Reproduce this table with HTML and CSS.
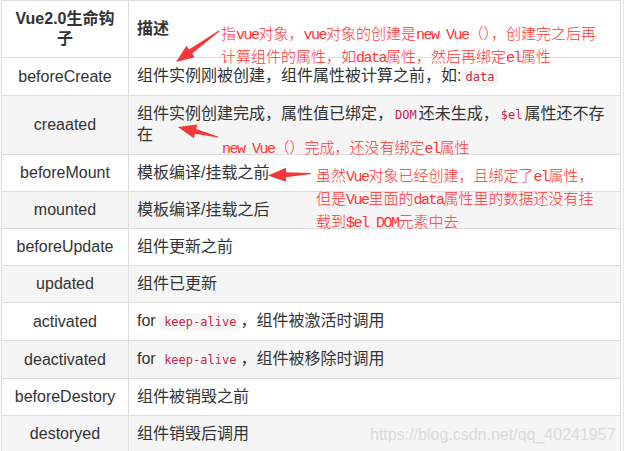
FILE: index.html
```html
<!DOCTYPE html>
<html lang="zh-CN">
<head>
  <meta charset="UTF-8">
  <meta name="viewport" content="width=device-width, initial-scale=1.0">
  <title>Vue2.0 生命钩子</title>
  <link rel="stylesheet" href="styles.css">
</head>
<body>

<div class="page">
  <table class="hooks">
    <colgroup>
      <col class="col-name">
      <col>
    </colgroup>
    <thead>
      <tr><th>Vue2.0生命钩子</th><th class="desc">描述</th></tr>
    </thead>
    <tbody>
      <tr><td>beforeCreate</td><td>组件实例刚被创建，组件属性被计算之前，如:<code>data</code></td></tr>
      <tr class="tall"><td>creaated</td><td>组件实例创建完成，属性值已绑定，<code class="tight">DOM</code>还未生成，<code class="tight">$el</code>属性还不存在</td></tr>
      <tr><td>beforeMount</td><td>模板编译/挂载之前</td></tr>
      <tr><td>mounted</td><td>模板编译/挂载之后</td></tr>
      <tr><td>beforeUpdate</td><td>组件更新之前</td></tr>
      <tr><td>updated</td><td>组件已更新</td></tr>
      <tr><td>activated</td><td>for <code>keep-alive</code>，组件被激活时调用</td></tr>
      <tr><td>deactivated</td><td>for <code>keep-alive</code>，组件被移除时调用</td></tr>
      <tr><td>beforeDestory</td><td>组件被销毁之前</td></tr>
      <tr><td>destoryed</td><td>组件销毁后调用</td></tr>
    </tbody>
  </table>

  <!-- red notes drawn over the table -->
  <svg class="arrows" width="625" height="451" viewBox="0 0 625 451">
    <polygon points="218.7,30.6 189.1,49.5 186.5,45.8 176,62 194.7,57.2 192.1,53.5 219.3,31.4"/>
    <polygon points="218.1,136.5 196.1,129 197.2,124.6 178,127 193.8,138.2 194.9,133.8 217.9,137.5"/>
    <polygon points="311,173 286,172.2 286,167.7 268,175.5 286,181.7 286,177.2 311,174"/>
  </svg>

  <p class="note note-top">指<span class="en">vue</span>对象，<span class="en">vue</span>对象的创建是<span class="en">new Vue</span>（），创建完之后再<br>计算组件的属性，如<span class="en">data</span>属性，然后再绑定<span class="en">el</span>属性</p>
  <p class="note note-mid"><span class="en">new Vue</span>（）完成，还没有绑定<span class="en">el</span>属性</p>
  <p class="note note-mount">虽然<span class="en">Vue</span>对象已经创建，且绑定了<span class="en">el</span>属性，<br>但是<span class="en">Vue</span>里面的<span class="en">data</span>属性里的数据还没有挂<br>载到<span class="en">$el DOM</span>元素中去</p>

  <p class="watermark">https://blog.csdn.net/qq_40241957</p>
</div>

</body>
</html>
```

FILE: styles.css
```css
body {
  margin: 0;
  background: #fff;
  color: #333;
  font-family: "Liberation Sans", "Noto Sans CJK SC", sans-serif;
}
.page {
  position: relative;
  width: 623px;
  height: 451px;
  border-right: 1px solid #e8e8e8;
  overflow: hidden;
}
.hooks {
  margin-left: 1px;
  width: 620px;
  border-collapse: collapse;
  table-layout: fixed;
  font-size: 16px;
  line-height: 20px;
}
.col-name {
  width: 127px;
}
.hooks th,
.hooks td {
  border: 1px solid #ddd;
  padding: 8px;
  vertical-align: middle;
  text-align: left;
}
.hooks th:first-child,
.hooks td:first-child {
  text-align: center;
}
.hooks th {
  font-weight: bold;
}
.hooks tbody tr:nth-child(even) {
  background: #f5f5f5;
}
.hooks tr.tall td {
  padding-bottom: 9px;
}
.hooks code {
  font-family: "DejaVu Sans Mono", "Liberation Mono", monospace;
  font-size: 12px;
  color: #c7254e;
  background: #f6f6f6;
  padding: 2px 4px;
  border-radius: 4px;
}
.hooks code.tight {
  padding: 2px 2px;
}
.arrows {
  position: absolute;
  left: 0;
  top: 0;
  pointer-events: none;
  fill: #f23838;
}
.note {
  position: absolute;
  margin: 0;
  color: #ff3333;
  font-family: "Noto Sans CJK SC", sans-serif;
  font-weight: 300;
  font-size: 15px;
  line-height: 20px;
  white-space: nowrap;
}
.note .en {
  font-family: "Liberation Mono", monospace;
  letter-spacing: -1.5px;
}
.note-top {
  left: 221px;
  top: 23px;
}
.note-mid {
  left: 222px;
  top: 137px;
}
.note-mount {
  left: 316px;
  top: 165px;
}
.watermark {
  position: absolute;
  left: 370px;
  top: 425px;
  margin: 0;
  font-size: 16px;
  line-height: 20px;
  color: #dadada;
}
```
